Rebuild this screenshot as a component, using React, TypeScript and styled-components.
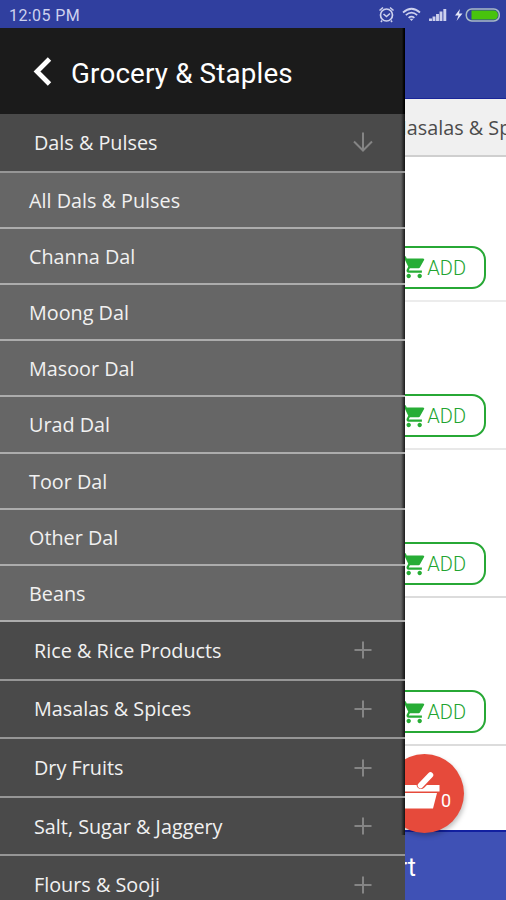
import React from "react";
import styled, { createGlobalStyle } from "styled-components";

const GlobalStyle = createGlobalStyle`
  * { box-sizing: border-box; }
  body { margin: 0; background: #fff; }
`;

const Screen = styled.div`
  position: relative;
  width: 506px;
  height: 900px;
  overflow: hidden;
  display: flex;
  flex-direction: column;
  background: #fff;
  font-family: "Open Sans", sans-serif;
`;

const StatusBar = styled.header`
  flex: none;
  height: 28px;
  padding: 3px 6px 0 9px;
  display: flex;
  align-items: center;
  justify-content: space-between;
  background: #303f9f;
  color: #cdd1ee;
`;

const Clock = styled.span`
  font: 400 16px/26px Roboto, sans-serif;
  letter-spacing: 0.4px;
`;

const StatusIcons = styled.svg`
  display: block;
  width: 126px;
  height: 20px;
  margin-top: -1px;
`;

const AppBar = styled.div`
  flex: none;
  height: 71px;
  background: #303f9f;
  border-bottom: 1px solid #1a2598;
`;

const TabStrip = styled.nav`
  flex: none;
  height: 58px;
  padding-left: 389px;
  overflow: hidden;
  background: #f0f0f0;
  border-bottom: 2px solid #cfcfcf;
  color: #4b4b4b;
  font-size: 19.8px;
  line-height: 57px;
  white-space: nowrap;
`;

const Products = styled.main`
  flex: 1;
  overflow: hidden;
`;

const Product = styled.section<{ $line: string }>`
  height: 148px;
  padding: 92px 20px 0 0;
  display: flex;
  justify-content: flex-end;
  align-items: flex-start;
  border-bottom: 2px solid ${(p) => p.$line};

  &:first-child {
    height: 145.4px;
    padding-top: 89px;
  }
`;

const AddButton = styled.button`
  width: 112px;
  height: 43px;
  padding: 0 18px 0 0;
  display: flex;
  align-items: center;
  justify-content: flex-end;
  background: #fff;
  border: 2px solid #27a835;
  border-radius: 14px;
  color: #22a430;
  font: 300 20px/38px Roboto, sans-serif;

  svg {
    display: block;
    width: 26.4px;
    height: 26.4px;
  }
`;

const AddLabel = styled.span`
  letter-spacing: 0;
`;

const CheckoutBar = styled.footer`
  flex: none;
  height: 70px;
  padding: 3px 90px 0 0;
  background: #3f51b5;
  border-top: 2px solid #1220a0;
  color: #fff;
  text-align: right;
  font: 400 25px/66px Roboto, sans-serif;
`;

const BasketButton = styled.button`
  position: absolute;
  right: 42px;
  bottom: 67px;
  width: 79px;
  height: 79px;
  padding: 0;
  border: 0;
  border-radius: 50%;
  background: #e64a3b;
  box-shadow: 1px 3px 5px rgba(0, 0, 0, 0.25);
  color: #fff;
  display: flex;
  align-items: center;

  svg {
    display: block;
    width: 60px;
    height: 79px;
  }
`;

const BasketCount = styled.span`
  padding-top: 15px;
  margin-left: -4px;
  font: 400 18px/20px Roboto, sans-serif;
`;

const Drawer = styled.aside`
  position: absolute;
  top: 28px;
  left: 0;
  bottom: 0;
  width: 405px;
  overflow: hidden;
  background: #4a4a4a;
  color: #f1f1f1;
`;

const DrawerHeader = styled.div`
  height: 86px;
  padding: 6px 0 0 32px;
  display: flex;
  align-items: center;
  background: linear-gradient(to right, #1b1b1b 402px, #000 404px);
  color: #fff;

  svg {
    display: block;
    width: 20px;
    height: 30px;
    margin-top: -6px;
  }
`;

const Title = styled.h1`
  margin: 0 0 0 19px;
  font: 400 27.8px/40px Roboto, sans-serif;
  letter-spacing: 0.15px;
`;

const Entry = styled.div<{ $edge?: string }>`
  display: flex;
  align-items: center;
  background-image: linear-gradient(to right, transparent 401px, rgba(0, 0, 0, 0.75) 405px);
  background-size: 100% ${(p) => p.$edge ?? "100%"};
  background-repeat: no-repeat;
  background-clip: padding-box;
  border-bottom: 2px solid #969696;
  font-size: 19.8px;
  white-space: nowrap;
`;

const Category = styled(Entry)`
  height: 58.6px;
  padding: 0 31px 0 34px;
  justify-content: space-between;
  background-color: #4a4a4a;

  svg {
    display: block;
    width: 22px;
    height: 22px;
  }
`;

const SubCategory = styled(Entry)`
  height: 56.2px;
  padding: 1px 0 0 29px;
  background-color: #666;
  border-bottom-color: #acacac;
`;

const CartIcon = () => (
  <svg viewBox="0 0 24 24" fill="#27ad36">
    <path d="M7 18c-1.1 0-1.99.9-1.99 2S5.900 22 7 22s2-.9 2-2-.9-2-2-2zM1 2v2h2l3.600 7.590-1.350 2.450C4.520 15.370 5.480 17 7 17h12v-2H7.420c-.14 0-.25-.11-.25-.25l.03-.12.9-1.630h7.450c.75 0 1.410-.41 1.750-1.030L21 5.500C21.400 4.800 20.900 4 20 4H5.210L4.270 2H1zm16 16c-1.100 0-1.990.9-1.990 2s.89 2 1.990 2 2-.9 2-2-.9-2-2-2z" />
  </svg>
);

const BackIcon = () => (
  <svg viewBox="0 0 20 30" fill="none" stroke="#fff" strokeWidth="4.800">
    <path d="M17.500 3 5 15.500 17.500 28" />
  </svg>
);

const PlusIcon = () => (
  <svg viewBox="0 0 22 22" fill="none" stroke="#858585" strokeWidth="2">
    <path d="M11 2.500v17M2.500 11h17" />
  </svg>
);

const DownIcon = () => (
  <svg viewBox="0 0 22 22" fill="none" stroke="#858585" strokeWidth="2">
    <path d="M11 1.500v18M2 10.500l9 9 9-9" />
  </svg>
);

const DeviceIcons = () => (
  <StatusIcons viewBox="374 5 126 20" fill="none" stroke="#cdd1ee">
    <circle cx="386.500" cy="15" r="6" strokeWidth="1.700" />
    <path d="M379.500 10.500l3.500-3M393.500 10.500l-3.500-3M383.500 14l3 2.500 3.500-3M382 20.500l-1 1.500M391 20.500l1 1.500" strokeWidth="1.600" />
    <path d="M403 12.500q8.500-7.500 17 0M405.800 15.200q5.700-5 11.400 0M408.600 17.800q2.900-2.500 5.800 0" strokeWidth="1.700" />
    <path d="M409.500 18.700h4l-2 2.200z" fill="#cdd1ee" stroke="none" />
    <path d="M430.500 21v-2.500M434 21v-4.500M437.500 21v-7M441 21v-9.500M444.800 21V9" strokeWidth="2.900" />
    <path d="M460 9l-5 6.500h3.500L456.500 21l6-7.500H459z" fill="#e4e6f7" stroke="none" />
    <rect x="466.300" y="9" width="33" height="12" rx="5.500" strokeWidth="1.500" stroke="#a9bbc6" />
    <path d="M471.500 10.500H494a4 4.500 0 0 1 0 9H471.500z" fill="#48c30d" stroke="none" />
  </StatusIcons>
);

const BasketIcon = () => (
  <svg viewBox="385 754 60 79">
    <path d="M398 785h41.500v6.500H398zM400 793h37l-4 15.500h-29z" fill="#fff" />
    <path d="M421 784.500l9.500-9.500" stroke="#e64a3b" strokeWidth="9" strokeLinecap="round" />
    <path d="M420.500 785.500l10-10.500" stroke="#fff" strokeWidth="5.500" strokeLinecap="round" />
  </svg>
);

const productLines = ["#ececec", "#e8e8e8", "#dcdcdc", "#dcdcdc"];

const subCategories = [
  "All Dals & Pulses",
  "Channa Dal",
  "Moong Dal",
  "Masoor Dal",
  "Urad Dal",
  "Toor Dal",
  "Other Dal",
  "Beans",
];

const categories: { name: string; edge?: string }[] = [
  { name: "Rice & Rice Products" },
  { name: "Masalas & Spices" },
  { name: "Dry Fruits" },
  { name: "Salt, Sugar & Jaggery", edge: "37px" },
  { name: "Flours & Sooji", edge: "0" },
];

export default function App() {
  return (
    <Screen>
      <GlobalStyle />
      <StatusBar>
        <Clock>12:05 PM</Clock>
        <DeviceIcons />
      </StatusBar>
      <AppBar />
      <TabStrip>Masalas &amp; Spices</TabStrip>
      <Products>
        {productLines.map((line, i) => (
          <Product key={i} $line={line}>
            <AddButton>
              <CartIcon />
              <AddLabel>ADD</AddLabel>
            </AddButton>
          </Product>
        ))}
      </Products>
      <CheckoutBar>Cart</CheckoutBar>
      <BasketButton aria-label="Basket">
        <BasketIcon />
        <BasketCount>0</BasketCount>
      </BasketButton>
      <Drawer>
        <DrawerHeader>
          <BackIcon />
          <Title>Grocery &amp; Staples</Title>
        </DrawerHeader>
        <Category>
          Dals &amp; Pulses
          <DownIcon />
        </Category>
        {subCategories.map((name) => (
          <SubCategory key={name}>{name}</SubCategory>
        ))}
        {categories.map(({ name, edge }) => (
          <Category key={name} $edge={edge}>
            {name}
            <PlusIcon />
          </Category>
        ))}
      </Drawer>
    </Screen>
  );
}
